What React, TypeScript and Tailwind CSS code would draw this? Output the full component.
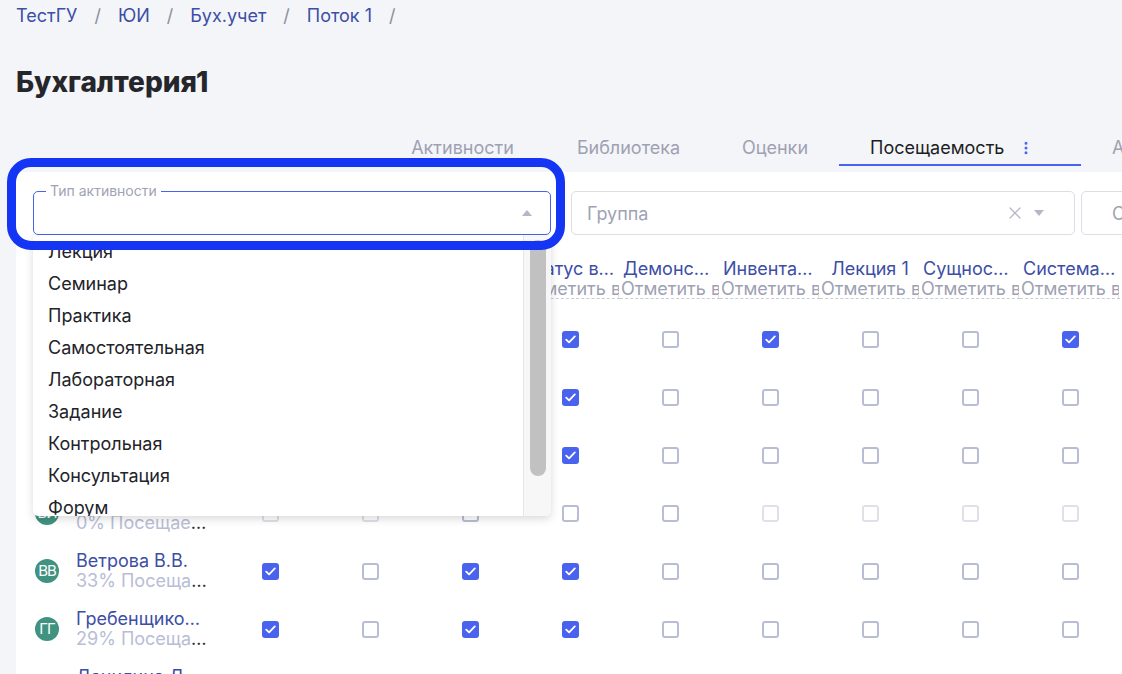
import React from 'react';
import { EllipsisVertical, X } from 'lucide-react';

type Mark = 'c' | 'u' | 'f';

interface Student {
  initials: string;
  name: string;
  stat: string;
  marks: Mark[];
}

const columns = [
  'Введение в курс',
  'Основы учета',
  'Баланс предприятия',
  'Статус в учете',
  'Демонстрация',
  'Инвентаризация',
  'Лекция 1',
  'Сущность учета',
  'Система счетов',
];

const students: Student[] = [
  { initials: 'АА', name: 'Абрамова А.А.', stat: '50% Посещаемость', marks: ['c', 'u', 'c', 'c', 'u', 'c', 'u', 'u', 'c'] },
  { initials: 'ББ', name: 'Баранов Б.Б.', stat: '33% Посещаемость', marks: ['c', 'u', 'c', 'c', 'u', 'u', 'u', 'u', 'u'] },
  { initials: 'ВВ', name: 'Васильев В.В.', stat: '33% Посещаемость', marks: ['c', 'u', 'c', 'c', 'u', 'u', 'u', 'u', 'u'] },
  { initials: 'ВИ', name: 'Веснина И.И.', stat: '0% Посещаемость', marks: ['f', 'f', 'u', 'u', 'u', 'f', 'f', 'f', 'f'] },
  { initials: 'ВВ', name: 'Ветрова В.В.', stat: '33% Посещаемость', marks: ['c', 'u', 'c', 'c', 'u', 'u', 'u', 'u', 'u'] },
  { initials: 'ГГ', name: 'Гребенщикова Г.Г.', stat: '29% Посещаемость', marks: ['c', 'u', 'c', 'c', 'u', 'u', 'u', 'u', 'u'] },
  { initials: 'ДД', name: 'Данилина Д.Д.', stat: '40% Посещаемость', marks: ['c', 'u', 'c', 'c', 'u', 'u', 'u', 'u', 'u'] },
];

const activityTypes = [
  'Лекция',
  'Семинар',
  'Практика',
  'Самостоятельная',
  'Лабораторная',
  'Задание',
  'Контрольная',
  'Консультация',
  'Форум',
];

const Checkbox: React.FC<{ mark: Mark }> = ({ mark }) => {
  if (mark === 'c') {
    return (
      <span className="w-[17px] h-[17px] rounded-[3px] bg-[#4a63ee] flex items-center justify-center">
        <svg width="11" height="9" viewBox="0 0 11 9" fill="none">
          <path d="M1.2 4.6L4.1 7.4L9.8 1.4" stroke="white" strokeWidth="1.8" strokeLinecap="round" strokeLinejoin="round" />
        </svg>
      </span>
    );
  }
  return (
    <span
      className={`w-[17px] h-[17px] rounded-[3px] border-2 bg-white ${
        mark === 'f' ? 'border-[#dfe1ea]' : 'border-[#b9bdd3]'
      }`}
    />
  );
};

const Triangle: React.FC<{ up?: boolean }> = ({ up }) => (
  <svg width="10" height="6" viewBox="0 0 10 6">
    <path d={up ? 'M0 6L5 0L10 6Z' : 'M0 0L5 6L10 0Z'} fill="#b4b7c8" />
  </svg>
);

const App: React.FC = () => {
  const crumbs = ['ТестГУ', 'ЮИ', 'Бух.учет', 'Поток 1'];

  return (
    <div className="relative w-full h-[674px] overflow-hidden bg-[#f4f5f8] font-['Inter','Liberation_Sans',sans-serif]">
      {/* breadcrumbs */}
      <div className="pl-4 pt-[5px] flex items-center text-[18px] leading-[22px] whitespace-nowrap">
        {crumbs.map((c) => (
          <React.Fragment key={c}>
            <span className="text-[#3c4ea6]">{c}</span>
            <span className="text-[#8c8f9c] px-[17px]">/</span>
          </React.Fragment>
        ))}
      </div>

      <h1 className="pl-4 mt-[39px] text-[28px] leading-[32px] font-extrabold text-[#25262b]">Бухгалтерия1</h1>

      {/* tabs */}
      <div className="mt-[32px] ml-[379px] flex text-[18px] leading-[24px] whitespace-nowrap">
        <div className="w-[167px] shrink-0 h-[36px] pt-[6px] text-center text-[#9ea1b3]">Активности</div>
        <div className="w-[165px] shrink-0 h-[36px] pt-[6px] text-center text-[#9ea1b3]">Библиотека</div>
        <div className="w-[128px] shrink-0 h-[36px] pt-[6px] text-center text-[#9ea1b3]">Оценки</div>
        <div className="w-[242px] shrink-0 h-[36px] pt-[6px] pl-[31px] flex border-b-2 border-[#4a63ee] text-[#1d1e24]">
          <span>Посещаемость</span>
          <span className="ml-[14px] mt-[4px]">
            <EllipsisVertical size={16} color="#4a63ee" strokeWidth={2.5} />
          </span>
        </div>
        <div className="shrink-0 h-[36px] pt-[6px] pl-[31px] text-[#9ea1b3]">Аналитика</div>
      </div>

      {/* panel */}
      <div className="ml-4 mt-[6px] bg-white pt-[19px] pl-[17px] h-[600px]">
        {/* filters */}
        <div className="flex items-center">
          <div className="relative shrink-0 w-[518px] h-[44px] rounded-[5px] border-[1.5px] border-[#4a63ee] flex items-center justify-end pr-[18px]">
            <span className="absolute -top-[9px] left-[12px] px-[4px] bg-white text-[14px] leading-[16px] text-[#a0a3b5] whitespace-nowrap">
              Тип активности
            </span>
            <Triangle up />
          </div>
          <div className="ml-[20px] shrink-0 w-[504px] h-[44px] rounded-[5px] border border-[#dcdee6] flex items-center pl-[15px] pr-[30px]">
            <span className="flex-1 text-[18px] text-[#a0a3b5]">Группа</span>
            <X size={20} color="#b4b7c8" strokeWidth={1.5} />
            <span className="ml-[9px]">
              <Triangle />
            </span>
          </div>
          <div className="ml-[6px] shrink-0 w-[200px] h-[44px] rounded-[5px] border border-[#dcdee6] flex items-center pl-[30px] text-[18px] text-[#a0a3b5] whitespace-nowrap">
            Статус
          </div>
        </div>

        {/* table */}
        <div className="mt-[23px]">
          <div className="flex">
            <div className="w-[187px] shrink-0" />
            {columns.map((c) => (
              <div key={c} className="relative w-[100px] shrink-0 border-b border-dashed border-[#c9cbd6] text-center">
                <div className="text-[18px] leading-[21px] text-[#3c4ea6] truncate px-[3px]">{c}</div>
                <div className="mx-[1px] text-[18px] leading-[19px] text-[#9ea1b3] whitespace-nowrap overflow-hidden text-left">
                  Отметить все
                </div>
                <span className="absolute right-[1px] bottom-0 w-px h-[4px] bg-[#dcdee6]" />
              </div>
            ))}
          </div>

          <div className="mt-[11px]">
            {students.map((s, i) => (
              <div key={i} className="flex items-center h-[58px]">
                <div className="w-[187px] shrink-0 flex items-center pl-[2px]">
                  <span className="w-[24px] h-[24px] shrink-0 rounded-full bg-[#3f9380] text-white text-[15px] flex items-center justify-center tracking-[-1px] overflow-hidden">
                    {s.initials}
                  </span>
                  <div className="ml-[17px] w-[132px] text-[18px] leading-[20px]">
                    <div className="truncate text-[#3c4ea6]">{s.name}</div>
                    <div className="truncate text-[#2a2b33]">
                      <span className="text-[#b9bdd6]">{s.stat}</span>
                    </div>
                  </div>
                </div>
                {s.marks.map((m, j) => (
                  <div key={j} className="w-[100px] shrink-0 flex justify-center">
                    <Checkbox mark={m} />
                  </div>
                ))}
              </div>
            ))}
          </div>
        </div>
      </div>

      {/* open dropdown list */}
      <div className="absolute left-[33px] top-[235px] w-[518px] h-[281px] overflow-hidden bg-white rounded-b-[5px] shadow-[0_3px_8px_rgba(0,0,0,0.15)]">
        {activityTypes.map((a) => (
          <div key={a} className="h-[32px] pl-[15px] flex items-center text-[18px] text-[#22232a]">
            {a}
          </div>
        ))}
        <div className="absolute top-0 right-0 w-[28px] h-full bg-[#f7f7f7] border-l border-[#e6e6e6]">
          <div className="absolute left-[6px] top-[5px] w-[16px] h-[236px] rounded-full bg-[#c1c1c1]" />
        </div>
      </div>

      {/* highlight frame */}
      <div className="absolute left-[7px] top-[158px] w-[558px] h-[92px] rounded-[24px] border-[9px] border-[#1535f5]" />
    </div>
  );
};

export default App;
